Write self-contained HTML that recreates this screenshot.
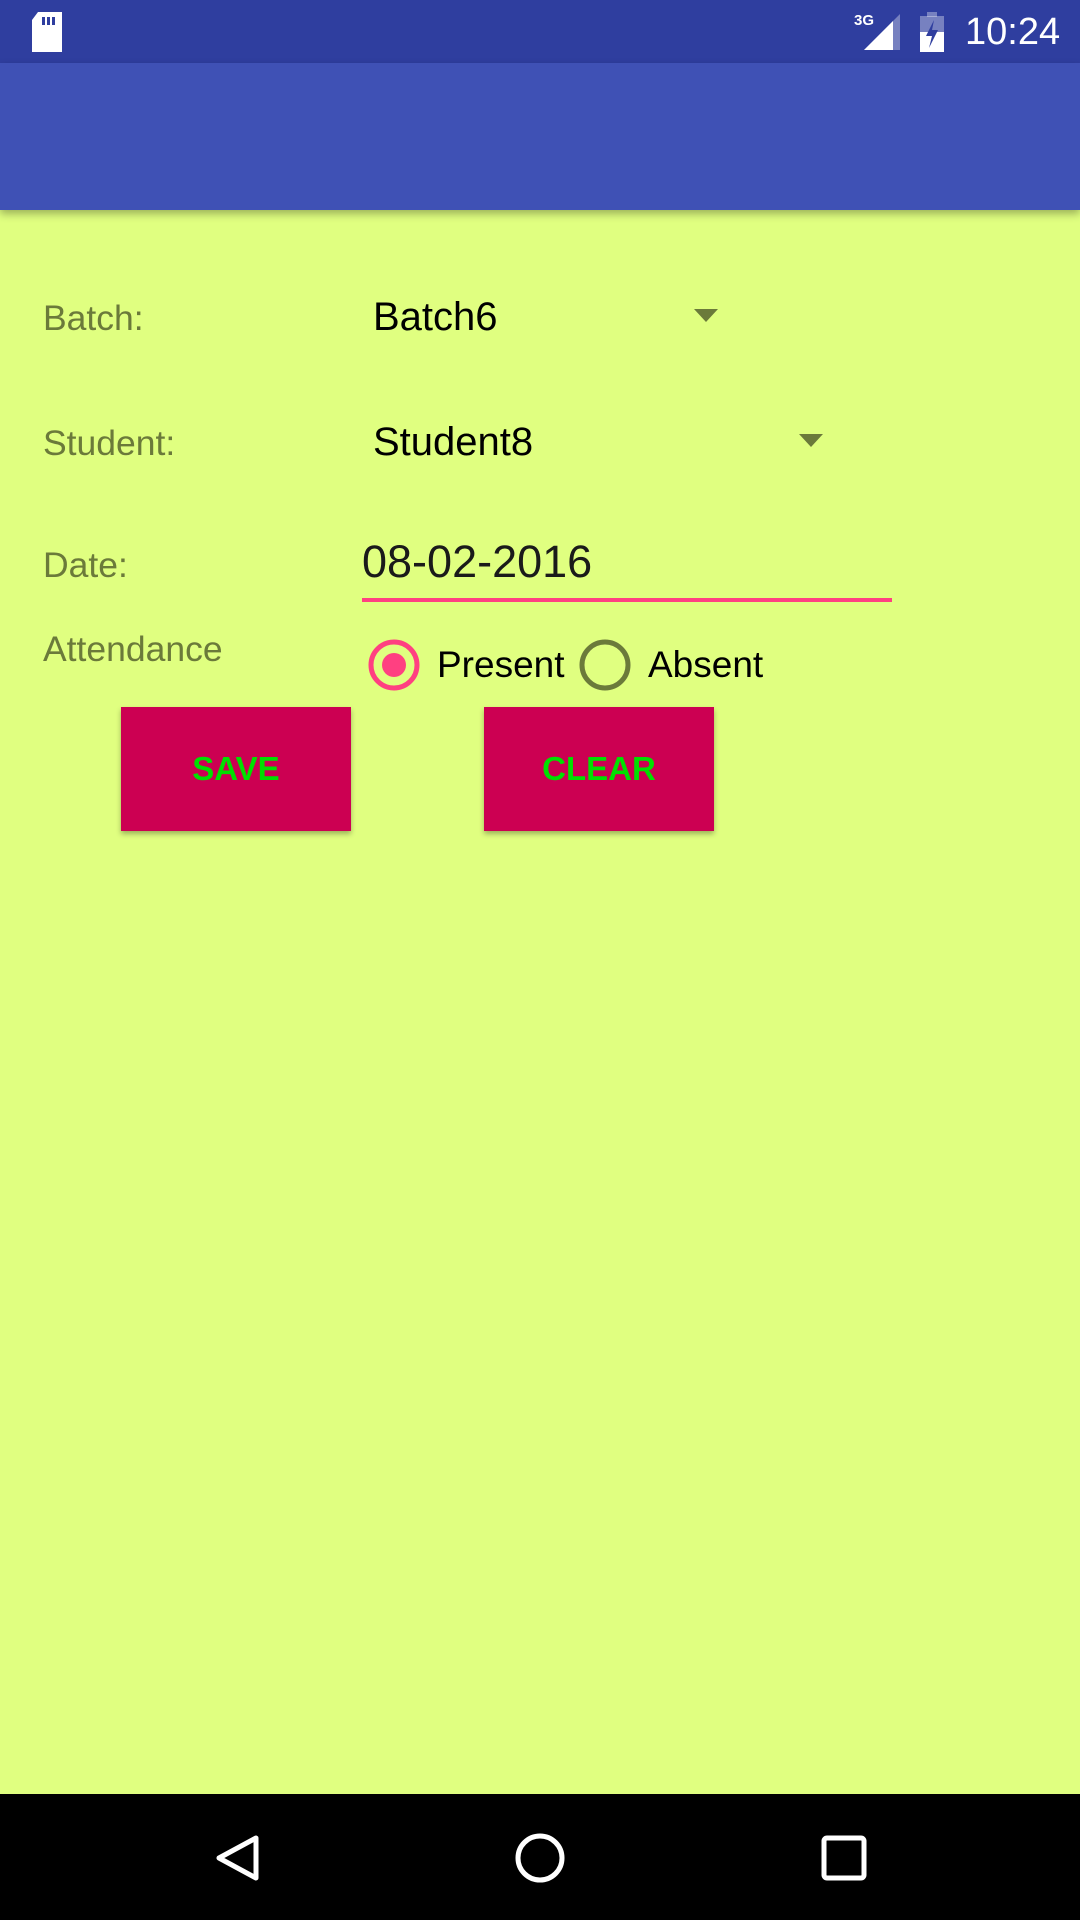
<!DOCTYPE html>
<html><head><meta charset="utf-8"><style>
*{margin:0;padding:0;box-sizing:border-box}
body{width:1080px;height:1920px;background:#e0ff80;font-family:"Liberation Sans",sans-serif;position:relative;overflow:hidden}
.abs{position:absolute}
.lbl{color:#6b7a3a;font-size:35.5px;left:43px;line-height:40px}
.val{color:#000;font-size:40px;left:373px;line-height:46px}
.btn{background:#cc0052;color:#00e000;font-size:33px;font-weight:bold;text-align:center;line-height:124px;top:707px;width:230px;height:124px;box-shadow:0 3px 5px rgba(0,0,0,.3)}
</style></head><body>
<div class="abs" style="left:0;top:0;width:1080px;height:63px;background:#2f3e9f"></div>
<div class="abs" style="left:0;top:63px;width:1080px;height:147px;background:#3f51b5;box-shadow:0 4px 8px rgba(0,0,0,.3)"></div>
<svg class="abs" style="left:30px;top:12px" width="36" height="42" viewBox="0 0 36 42"><path d="M8 0H32V40H2V8Z" fill="#fff"/><rect x="12" y="5" width="3" height="8" fill="#2f3e9f"/><rect x="17" y="5" width="3" height="8" fill="#2f3e9f"/><rect x="22" y="5" width="3" height="8" fill="#2f3e9f"/></svg>
<div class="abs" style="left:854px;top:12px;color:#fff;font-size:15px;font-weight:bold">3G</div>
<svg class="abs" style="left:862px;top:12px" width="40" height="40" viewBox="0 0 40 40"><path d="M38 2V38H2Z" fill="#fff" opacity=".35"/><path d="M31 9V38H2Z" fill="#fff"/></svg>
<svg class="abs" style="left:920px;top:12px" width="26" height="40" viewBox="0 0 26 40"><rect x="0" y="4" width="24" height="36" fill="#fff" opacity=".35"/><rect x="7" y="0" width="10" height="5" fill="#fff" opacity=".35"/><rect x="0" y="20" width="24" height="20" fill="#fff"/><path d="M14 8L6 24H12L9 36L18 18H12Z" fill="#2f3e9f"/></svg>
<div class="abs" style="left:965px;top:10px;color:#fff;font-size:38px;line-height:44px">10:24</div>

<div class="abs lbl" style="top:298px">Batch:</div>
<div class="abs val" style="top:294px">Batch6</div>
<svg class="abs" style="left:694px;top:309px" width="24" height="14"><path d="M0 0H24L12 13Z" fill="#6b7a3a"/></svg>
<div class="abs lbl" style="top:423px">Student:</div>
<div class="abs val" style="top:419px">Student8</div>
<svg class="abs" style="left:799px;top:434px" width="24" height="14"><path d="M0 0H24L12 13Z" fill="#6b7a3a"/></svg>
<div class="abs lbl" style="top:545px">Date:</div>
<div class="abs" style="left:362px;top:535px;font-size:45px;line-height:54px;color:#1a1a1a">08-02-2016</div>
<div class="abs" style="left:362px;top:598px;width:530px;height:4px;background:#ff4081"></div>
<div class="abs lbl" style="top:629px">Attendance</div>
<svg class="abs" style="left:366px;top:637px" width="56" height="56"><circle cx="28" cy="28" r="23" fill="none" stroke="#ff4081" stroke-width="5"/><circle cx="28" cy="28" r="12" fill="#ff4081"/></svg>
<div class="abs val" style="left:437px;top:642px;font-size:37px">Present</div>
<svg class="abs" style="left:577px;top:637px" width="56" height="56"><circle cx="28" cy="28" r="23" fill="none" stroke="#6b7a3a" stroke-width="5"/></svg>
<div class="abs val" style="left:648px;top:642px;font-size:37px">Absent</div>
<div class="abs btn" style="left:121px">SAVE</div>
<div class="abs btn" style="left:484px">CLEAR</div>

<div class="abs" style="left:0;top:1794px;width:1080px;height:126px;background:#000"></div>
<svg class="abs" style="left:0;top:1794px" width="1080" height="126"><path d="M256 44V84L219 64Z" fill="none" stroke="#fff" stroke-width="5" stroke-linejoin="round"/><circle cx="540" cy="64" r="22" fill="none" stroke="#fff" stroke-width="5"/><rect x="824" y="44" width="40" height="40" rx="3" fill="none" stroke="#fff" stroke-width="5"/></svg>
</body></html>
